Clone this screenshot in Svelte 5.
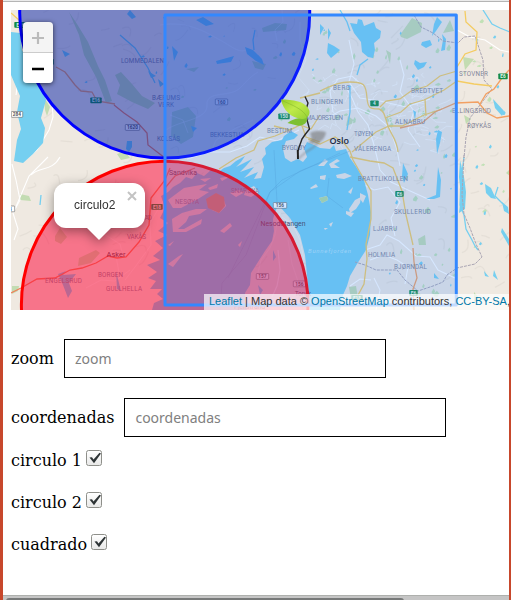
<script>
  let checks = $state([
    { label: 'circulo 1', on: true },
    { label: 'circulo 2', on: true },
    { label: 'cuadrado', on: true },
  ]);

  // Map geometry, in the map's own pixel grid
  const water = [
    'M11 32 L20 33 22 50 30 66 42 88 46 100 41 118 45 128 43 143 33 154 23 163 14 161 17 140 21 129 17 112 20 96 11 75Z',
    'M161 196 L168 192 173 187 180 183 186 177 192 179 197 173 204 176 211 170 217 173 224 168 230 166 236 161 245 156 241 162 236 167 252 159 246 166 240 172 254 167 249 173 244 178 258 172 254 179 261 178 264 167 262 159 266 154 265 148 272 142 282 140 284 136 291 131 298 135 294 139 286 141 283 149 285 158 291 162 298 159 303 162 307 157 304 148 307 142 314 145 320 148 330 149 334 145 336 151 346 149 350 158 357 168 364 180 368 195 371 212 370 235 366 250 357 264 350 276 347 286 343 295 340 310 310 310 308 285 305 255 300 235 290 218 281 208 277 207 273 219 274 231 272 241 265 251 258 262 251 273 250 285 245 293 247 310 152 310 154 303 163 299 157 294 162 289 150 289 156 281 148 278 157 272 147 265 160 260 153 256 163 248 155 241 167 235 158 231 168 223 160 218 165 208Z',
    'M350 23 L357 24 358 19 362 20 364 26 374 22 376 28 381 31 380 38 374 43 375 50 373 58 368 57 362 52 361 42 354 33Z',
    'M328 43 L334 46 340 50 337 53 331 58 327 53Z',
    'M415 60 L420 63 427 62 424 67 418 70 414 64Z',
    'M422 42 L430 40 432 45 426 48 421 45Z',
    'M442 34 L446 39 445 50 441 51 443 40Z M437 17 L442 22 436 31 432 36 434 24Z',
    'M438 130 L442 132 440 143 437 154 436 139Z M403 163 L408 174 404 183 402 176Z',
    'M438 167 L441 180 440 197 434 199 426 199 436 195 437 181Z',
    'M460 160 L464 177 466 192 465 209 459 213 461 195 459 177Z',
    'M485 184 L491 188 496 199 491 198 486 193Z M502 202 L508 207 509 214 504 211Z',
    'M493 99 L504 111 502 116 495 108Z M502 228 L509 239 509 246 501 232Z',
    'M494 270 L498 280 493 276Z M484 271 L489 277 485 276Z M434 273 L439 279 434 278Z',
    'M196 20 L203 17 214 24 206 26Z M245 47 L253 50 262 59 264 65 256 61 247 54Z',
    'M172 46 L178 52 174 61Z M216 61 L234 56 231 62 217 64Z',
    'M130 10 L136 17 132 19 127 14Z M62 50 L70 54 65 57Z M127 141 L132 141 132 147 129 152 126 149Z',
    'M158 79 L164 84 160 87Z M148 71 L156 76 151 78Z M191 126 L197 128 193 132Z',
    'M58 274 L66 271 63 275 76 274 69 283 72 291 68 298 63 285Z M116 271 L121 291 117 289Z',
    'M258 285 L263 290 260 295Z M258 235 L260 242 257 243Z M273 250 L276 257 273 261Z',
    'M320 24 L324 28 320 35Z M328 28 L331 33 328 40Z M413 110 L416 112 415 120Z',
  ];
  const islands = [
    'M168 200 L184 188 195 186 207 184 199 190 209 192 198 199 181 208 173 208Z',
    'M172 219 L182 213 196 209 207 209 200 214 189 216 186 222 178 229 184 229 202 219 201 224 186 232 173 232Z M208 188 L218 184 217 188 210 190Z',
    'M220 231 L230 223 232 226 224 233Z M168 264 L179 256 183 254 173 267Z',
    'M208 199 L216 194 223 198 226 206 219 213 212 210Z M200 179 L211 178 205 182Z M230 193 L238 190 245 192 236 197Z',
    'M246 190 L254 186 259 192 251 197 244 195Z M220 178 L231 176 222 181Z',
    'M318 166 L325 159 328 161 324 166Z M329 164 L337 159 340 161 334 164 340 168 331 168Z',
    'M336 175 L345 173 352 176 344 179 337 178Z M320 176 L326 175 325 180 320 179Z',
    'M310 188 L316 184 318 187 311 189Z M319 198 L327 196 328 200 322 203Z',
    'M349 209 L355 200 361 197 360 203 356 209 350 213Z M346 211 L354 213 351 217 346 214Z',
    'M360 193 L366 196 363 203 360 199Z M329 224 L333 222 331 227Z M324 228 L328 228 325 230Z',
    'M168 245 L174 241 170 246Z M238 245 L242 241 240 247Z M348 192 L353 187 351 194Z',
  ];
  const greens = [
    'M69 12 L77 24 88 42 98 66 105 80 112 101 106 103 96 77 84 55 79 35Z',
    'M115 75 L121 72 132 84 142 96 155 103 148 109 132 102 117 94 120 85Z',
    'M172 112 L188 107 196 116 193 137 181 144 171 136Z M186 69 L199 67 194 72Z',
    'M400 35 L412 18 422 23 421 32 407 39 401 37Z M443 33 L450 20 454 31Z',
    'M262 28 L275 23 287 24 286 30 263 32Z M252 61 L266 64 263 70 255 68Z',
    'M418 239 L425 235 426 245 419 245Z M349 287 L356 286 358 298 351 299Z M348 116 L356 122 346 126Z',
    'M386 50 L391 53 390 64Z M463 57 L474 59 465 70Z',
    'M20 194 L29 196 31 201 20 200Z M12 286 L19 286 18 291 12 294Z M72 217 L84 221 67 228Z',
    'M55 236 L60 228 67 237 61 244 55 241Z',
    'M79 258 L96 250 100 253 91 263 78 266Z M506 173 L510 169 510 176Z M474 292 L480 299 474 302Z',
    'M44 97 L50 107 47 116 45 110Z M117 154 L125 151 130 158 121 160Z M464 115 L471 119 466 124Z',
  ];
  const minor = [
    'M325 119 L340 111 358 108 376 116 390 128 397 150 400 166',
    'M345 85 L352 98 358 112 368 125 374 145 380 170 391 182 408 190 430 200',
    'M349 40 L354 64 349 82 360 98 380 101 406 107 430 99',
    'M400 60 L404 75 400 92 414 111 408 130 420 147',
    'M187 159 L210 152 230 152 247 146 260 137 277 141 299 130',
    'M365 250 L380 245 387 235 399 241 416 256 430 257 438 270 455 278',
    'M370 260 L384 255 397 260 408 267 405 284',
    'M357 181 L374 190 388 187 400 202 391 218 395 236',
    'M374 278 L380 290 376 310 M350 286 L360 279 371 280',
    'M272 297 L277 286 280 270 278 250',
    'M333 112 L330 91 338 79 352 76 363 86',
    'M11 71 L18 80 16 95 M52 101 L53 117 49 130 37 150 25 160 M14 240 L18 229 13 213 20 200 16 180 12 164',
    'M48 157 L29 176 15 209 M60 157 C52 172 39 166 31 175 M457 30 L470 37 485 40 500 50 509 52',
  ];
  // Lanes inside the shaded circles, drawn fainter
  const lanes = [
    'M160 25 C190 20 210 35 220 40 S240 55 247 49',
    'M166 130 C180 120 208 120 207 105 S230 98 240 88 250 77 258 72',
    'M282 10 L283 22 275 30 277 41 M300 22 L300 40 306 60 298 77 309 90',
    'M163 201 L150 223 151 245 135 267 125 280 M86 288 L101 280 115 281 130 270 M116 256 L120 278 M99 208 L104 234 120 244 123 256',
    'M258 273 L261 260 270 248 275 235 277 222 280 213 M282 217 L293 225 300 240 304 260 M291 300 L300 287 292 264 288 240',
    'M170 115 L183 120 188 133 M212 150 L216 140 236 128 253 120',
  ];
  const yellow = [
    'M320 91 C330 87 336 82 350 82 S366 84 367 98 374 108 379 109 385 117 388 126 397 139 398 152 396 160',
    'M320 93 L300 98 M274 126 L290 130 300 125 311 129 320 115 M352 152 L376 132 389 126 402 126 424 115 442 109',
    'M380 107 L386 101 400 99 411 91 427 86 440 76 457 71',
    'M385 118 L401 112 410 104 424 100 444 90 457 81 474 84 492 86',
    'M457 67 L465 54 476 50 477 32 466 22 465 11',
    'M308 139 L320 144 335 137 344 143 350 151 353 160 361 174 371 191 371 219 366 244 367 259 364 284 357 297',
    'M350 157 L370 161 384 163 393 168 402 191 406 215 413 245',
    'M11 13 L19 20 M219 169 L236 158 254 150 258 141 275 136 294 128',
    'M425 99 L426 116 M302 126 L306 137 320 142',
  ];
  const orange = [
    'M56 67 L65 72 75 85 81 91 92 92 97 101 115 104',
    'M413 248 L414 262 417 278 413 289 414 310',
    'M400 128 L422 123 435 112 456 103 478 102 487 113 497 118 509 116 M480 104 L486 94 494 89 502 78 509 70',
  ];
  const red = ['M114 105 L124 113 137 122 147 133 148 145 165 158 M170 168 L165 180 151 198 149 225 139 242 126 257 117 258 108 256 96 263 82 268 70 270 55 278 37 279 21 288 11 293', 'M165 188 L175 176 195 168'];
  const borders = ['M414 15 L421 27 433 33 443 41 458 43 464 37 475 36 483 60 484 80 492 89 480 105 470 118 466 137 464 158', 'M464 155 L462 195 464 214 470 228 476 244 482 257 475 264 457 268 447 275 443 282 433 286 418 291 405 280 397 270 376 270 365 265 355 262'];
  const streams = ['M340 10 L347 22 350 31 M368 59 L360 65 357 75', 'M350 87 L350 112 347 130', 'M483 10 L492 24 500 28 510 32', 'M464 157 L461 180 460 205 464 215 466 229 472 240 475 246 478 250', 'M41 195 L40 205', 'M120 35 L135 48 148 68 155 83', 'M498 187 L495 196 503 204', 'M255 30 L253 40 254 50'];

  // x, baseline, width, text
  const places = [
    [121, 62.5, 43, 'LOMMEDALEN'], [152, 99.5, 28, 'BÆRUMS'], [158, 106.5, 16, 'VERK'], [157, 140.5, 23, 'KOLSÅS'],
    [210, 137, 34, 'BEKKESTUA'], [267, 132.5, 25, 'BESTUM'], [282, 149.5, 24, 'BYGDØY'], [333, 90, 17, 'BERG'],
    [311, 104, 32, 'BLINDERN'], [306, 119.5, 37, 'MAJORSTUEN'], [411, 93, 32, 'BREDTVET'], [395, 123.5, 30, 'ALNABRU'],
    [354, 135.5, 19, 'TØYEN'], [354, 151, 37, 'VÅLERENGA'], [459, 75.8, 29, 'STOVNER'], [452, 112.5, 39, 'ELLINGSRUD'],
    [467, 127.5, 24, 'RØYKÅS'], [358, 181, 50, 'BRATTLIKOLLEN'], [394, 213.5, 37, 'SKULLERUD'], [373, 230.5, 24, 'LJABRU'],
    [368, 257, 27, 'HOLMLIA'], [394, 269, 33, 'BJØRNDAL'], [175, 204, 24, 'NESØYA'], [231, 193, 28, 'SNARØYA'],
    [127, 220, 25, 'HVALSTAD'], [127, 239, 19, 'VAKÅS'], [98, 277, 25, 'BORGEN'], [106, 290.5, 36, 'GULLHELLA'], [45, 283, 37, 'ENGELSRUD'],
  ];
  const towns = [
    [106.5, 256.5, 19, 'Asker'], [169, 174.5, 28, 'Sandvika'], [260.5, 225.5, 45, 'Nesoddtangen'], [295, 295.5, 16, 'Torvik'], [234, 309, 31, 'Fjellstrand'],
  ];
  const shields = [
    [14, 22, 13, 'E16', 'g'], [42, 59, 12, 'E16', 'g'], [90, 97.5, 12, 'E16', 'g'], [278, 113.5, 12, '150', 'g'],
    [370, 100.5, 9, '4', 'g'], [498, 73.5, 10, 'E6', 'g'], [395, 191, 9, 'E6', 'g'], [409, 290, 9, 'E6', 'g'],
    [351, 295, 12, 'E18', 'g'], [151, 204, 12, 'E18', 'g'], [11, 111.5, 12, '284', 'w'], [125, 124.5, 15, '1620', 'w'],
    [215, 99, 13, '160', 'w'], [273, 202.5, 14, '156', 'w'], [256, 273.5, 13, '157', 'w'], [293, 281, 13, '156', 'w'], [6, 206, 9, '3', 'w'],
  ];

  // Small ponds and parks scattered over the land, from a fixed seed
  let seed = 41;
  const rnd = () => (seed = (seed * 16807) % 2147483647) / 2147483647;
  const inland = (x, y) => x > 378 || y < 125;
  const scatter = (n, x0, x1, y0, y1, size = 1) =>
    Array.from({ length: n }, () => {
      const x = x0 + rnd() * (x1 - x0), y = y0 + rnd() * (y1 - y0), a = (1 + rnd() * 2.5) * size, b = (1 + rnd() * 3) * size;
      return inland(x, y) ? `M${x} ${y}l${a} ${-b} ${a * 0.7} ${b * 0.8} ${-a * 0.6} ${b * 0.9} ${-a} ${-b * 0.2}z` : '';
    }).join('');
  const parks = scatter(65, 318, 455, 45, 300) + scatter(14, 180, 325, 30, 140, 0.8) + scatter(26, 310, 450, 65, 140) + scatter(12, 458, 505, 15, 300, 0.8);
  const ponds = scatter(30, 380, 508, 15, 300, 0.75) + scatter(16, 80, 350, 12, 95, 0.7);
  const relief = Array.from({ length: 170 }, () => {
    const x = 12 + rnd() * 495, y = 12 + rnd() * 295;
    return `M${x} ${y}q${4 + rnd() * 8} ${-9 + rnd() * 12} ${5 + rnd() * 8} ${-14 + rnd() * 24}`;
  }).join('');
  const streets = Array.from({ length: 85 }, () => {
    const x = 300 + rnd() * 140, y = 75 + rnd() * 75;
    return `M${x} ${y}l${-6 + rnd() * 15} ${-7 + rnd() * 14} ${-2 + rnd() * 12} ${-5 + rnd() * 10}`;
  }).join('');
</script>

<div class="frame">
  <div class="topbar"></div>
  <main>
    <div class="map">
      <svg class="tiles" width="498" height="300" viewBox="11 10 498 300">
        <rect x="11" y="10" width="498" height="300" fill="#efe9e1" />
        <path d={relief} class="relief" />
        {#each greens as d}<path {d} fill="#c3dcb2" />{/each}
        <path d={parks} fill="#b8dfae" opacity=".85" />
        {#each minor as d}<path {d} class="road" />{/each}
        {#each lanes as d}<path {d} class="road faint" />{/each}
        <path d={streets} class="street" />
        {#each water as d}<path {d} fill="#75cff0" />{/each}
        <path d={ponds} fill="#75cff0" />
        {#each streams as d}<path {d} class="stream" />{/each}
        {#each islands as d}<path {d} fill="#efe9e1" />{/each}
        <path d="M206 199L216 193 224 197 225 206 219 213 208 208Z" fill="#d0a878" />
        <path d="M319 198l8-2 1 4-6 3z" fill="#b3dda2" />
        <path d="M220 310L222 283 246 255 270 192 300 171 350 151M228 278L270 192 282 180 340 153M329 178l-2 18 16 12M277 202L274 150" class="ferry" />
        {#each borders as d}<path {d} class="border" />{/each}
        {#each yellow as d}<path {d} class="yellow" />{/each}
        {#each orange as d}<path {d} class="orange" />{/each}
        {#each red as d}<path {d} class="red" />{/each}
        {#each places as [x, y, w, t]}<text {x} {y} textLength={w} class="place">{t}</text>{/each}
        {#each towns as [x, y, w, t]}<text {x} {y} textLength={w} lengthAdjust="spacingAndGlyphs" class="town">{t}</text>{/each}
        <text x="308" y="252.5" textLength="43" class="sea">Bunnefjorden</text>
        {#each shields as [x, y, w, t, k]}
          <rect x={x + 0.3} y={y} width={w - 0.6} height="5.8" rx="0.7" class="shield {k}" />
          <text x={x + w / 2} y={y + 4.7} class="num {k}">{t}</text>
        {/each}

        <circle cx="164.7" cy="13" r="145" fill="#0320a8" fill-opacity=".5" stroke="#00f" stroke-width="3" />
        <circle cx="164.7" cy="304.5" r="143.3" fill="#f03" fill-opacity=".5" stroke="red" stroke-width="3" />
        <rect x="165" y="15" width="291.3" height="290" fill="#38f" fill-opacity=".2" stroke="#38f" stroke-width="3" stroke-linejoin="round" />
        <text x="329.5" y="144" textLength="19.500" lengthAdjust="spacingAndGlyphs" class="city">Oslo</text>

        <defs>
          <linearGradient id="leaf" x1="0" y1="0" x2="1" y2="1">
            <stop offset="0" stop-color="#95cc28" /><stop offset=".45" stop-color="#c0ea4a" /><stop offset="1" stop-color="#92d032" />
          </linearGradient>
          <filter id="soft" x="-30%" y="-30%" width="160%" height="160%"><feGaussianBlur stdDeviation=".9" /></filter>
        </defs>
        <g filter="url(#soft)" opacity=".6">
          <path d="M310 133C315 130 322 131 326 132 325 140 319 145 308 143 312 140 312 138 310 133Z" fill="#777" />
          <path d="M298 159L306 152 314 147 320 141" fill="none" stroke="#777" stroke-width="1.5" />
        </g>
        <path d="M305 96.500L308 103 306.500 108 306.500 118 309.500 129 305.500 134 302 139 299.500 146 297.800 151" class="twig" />
        <path d="M297.800 150L298 159" stroke="#222" stroke-width="2" />
        <path d="M287.500 123C295 117 303 118 307 117.500 308 123 303 126.500 297 125.500Z" fill="#7dc032" />
        <path d="M281 99.500C292 99.500 306 101 309.300 110.500 310.500 115 307 119.500 302 119 291 118 283 110 281 99.500Z" fill="url(#leaf)" />
        <path d="M282 100.500C292 105 303 109 307 117" fill="none" stroke="#86b82b" stroke-width=".6" />
      </svg>

      <div class="zoomctl">
        <button class="off" aria-label="Zoom in"><svg width="14" height="14"><path d="M7 1v12M1 7h12" stroke="#bbb" stroke-width="2.200" /></svg></button>
        <button aria-label="Zoom out"><svg width="14" height="14"><path d="M1 8h12" stroke="#000" stroke-width="2.400" /></svg></button>
      </div>

      <div class="popup">
        <div class="bubble">circulo2
          <svg class="close" width="10" height="10"><path d="M1 1l8 8M9 1L1 9" stroke="#c3c3c3" stroke-width="2" /></svg>
        </div>
        <svg class="tip" width="26" height="14"><path d="M0 0h26L13 13z" fill="#fff" /></svg>
      </div>

      <div class="credit"><a href="#leaflet">Leaflet</a> | Map data © <a href="#osm">OpenStreetMap</a> contributors, <a href="#cc">CC-BY-SA</a>,</div>
    </div>

    <div class="field first"><label for="zoom">zoom</label><input id="zoom" placeholder="zoom" /></div>
    <div class="field"><label for="coords">coordenadas</label><input id="coords" placeholder="coordenadas" /></div>

    <div class="checks">
      {#each checks as c}
        <div class="check">
          <span>{c.label}</span>
          <button class="box" role="checkbox" aria-checked={c.on} aria-label={c.label} onclick={() => (c.on = !c.on)}>
            {#if c.on}<svg width="14" height="14" viewBox="0 0 14 14"><path d="M2.500 6.500L5 6.200 6.500 8.500 12.500 1.800 14 2.500 7 12.200Z" fill="#2e3436" /></svg>{/if}
          </button>
        </div>
      {/each}
    </div>
  </main>
  <div class="scroll"><div class="thumb"></div></div>
</div>

<style>
  :global(body) { margin: 0; overflow: hidden; background: #fff; }
  .frame { box-sizing: border-box; width: 511px; height: 600px; border-left: 3px solid #c7472c; border-right: 2px solid #c7472c; display: flex; flex-direction: column; overflow: hidden; background: #fff; font: 16px/19px "DejaVu Serif", serif; color: #000; }
  .topbar { height: 1px; flex: none; background: #ebebeb; border-bottom: 1px solid #b5b5b5; }
  main { flex: 1; padding: 8px 0 0 8px; }
  .map { position: relative; width: 498px; height: 300px; overflow: hidden; }
  .tiles { display: block; }
  .relief { fill: none; stroke: #d5cfc5; stroke-width: 1.3; opacity: .35; }
  .road { fill: none; stroke: #fff; stroke-width: 1.1; }
  .road.faint { stroke-width: .8; opacity: .5; }
  .street { fill: none; stroke: #fff; stroke-width: .7; opacity: .75; }
  .stream { fill: none; stroke: #75cff0; stroke-width: 1.3; }
  .ferry { fill: none; stroke: #5aa5d3; stroke-width: .6; opacity: .6; }
  .border { fill: none; stroke: #aaa5b3; stroke-width: 1; stroke-dasharray: 3 1; }
  .yellow { fill: none; stroke: #f4cc62; stroke-width: 1.3; }
  .orange { fill: none; stroke: #f2a063; stroke-width: 1.3; }
  .red { fill: none; stroke: #f0805a; stroke-width: 1.3; }
  .place { font: 6.3px Roboto, sans-serif; fill: #83869a; }
  .town { font: 7px Roboto, sans-serif; fill: #4c4654; }
  .city { font: 600 9.5px "Open Sans", "Noto Sans", sans-serif; fill: #1c2b46; }
  .sea { font: italic 6px Roboto, sans-serif; fill: #b8e4f7; }
  .shield.g { fill: #128a45; }
  .shield.w { fill: #fff; stroke: #666; stroke-width: .6; }
  .num { font: bold 4.8px Roboto, sans-serif; text-anchor: middle; fill: #555; }
  .num.g { fill: #e5f4e9; }
  .twig { fill: none; stroke: #292929; stroke-width: 1.4; stroke-linejoin: round; }

  .zoomctl { position: absolute; left: 12px; top: 12px; width: 30px; border-radius: 4px; overflow: hidden; box-shadow: 0 1px 5px rgba(0, 0, 0, .65); }
  .zoomctl button { display: flex; align-items: center; justify-content: center; width: 30px; height: 30px; padding: 0; border: 0; background: #fff; }
  .zoomctl .off { height: 31px; background: #f4f4f4; border-bottom: 1px solid #ccc; padding-top: 2px; box-sizing: border-box; }

  .popup { position: absolute; left: 43px; top: 173px; width: 91px; filter: drop-shadow(0 3px 6px rgba(0, 0, 0, .4)); }
  .bubble { position: relative; height: 45px; border-radius: 12px; background: #fff; padding-left: 20px; box-sizing: border-box; font: 12px/44px "Liberation Sans", Arial, sans-serif; color: #333; }
  .close { position: absolute; right: 8px; top: 8px; }
  .tip { display: block; margin: -1px 0 0 32px; }

  .credit { position: absolute; left: 193px; bottom: 0; width: 310px; height: 16px; padding-left: 5px; background: rgba(255, 255, 255, .7); font: 11px/14px "Liberation Sans", Arial, sans-serif; color: #333; white-space: nowrap; }
  .credit a { color: #0078a8; text-decoration: none; }

  .field { display: flex; align-items: center; gap: 10px; margin-top: 20px; height: 39px; }
  .field.first { margin-top: 29px; }
  input { box-sizing: border-box; width: 322px; height: 39px; margin: 0; padding: 0 10px; border: 1px solid #000; border-radius: 0; background: #fff; font: 14px "Noto Sans", sans-serif; }
  input::placeholder { color: #808080; opacity: 1; }
  .checks { padding-top: 14px; }
  .check { display: flex; gap: 4px; height: 42px; align-items: flex-start; }
  .box { box-sizing: border-box; width: 16px; height: 16px; margin-top: -1px; padding: 0; border: 1px solid #8e8f8a; border-radius: 2.5px; background: linear-gradient(#fff, #e9e9e8); display: flex; }
  .box svg { overflow: visible; }
  .scroll { flex: none; height: 4px; border-top: 1px solid #aeb0ad; background: #c5c5c5; padding: 0 0 0 3px; }
  .thumb { width: 398px; height: 4px; margin-top: 2px; border-radius: 3px 3px 0 0; background: #777979; }
</style>
